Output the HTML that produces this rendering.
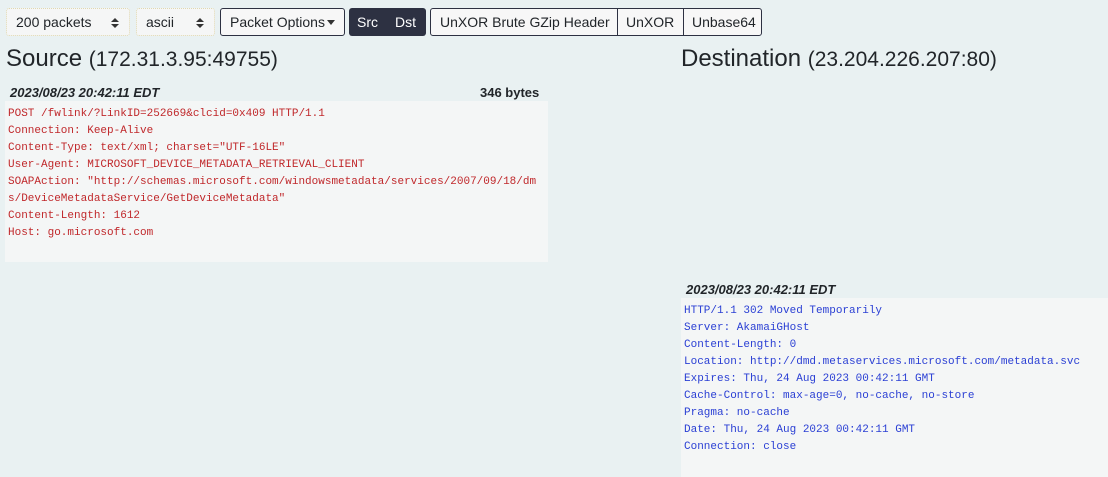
<!DOCTYPE html>
<html><head><style>
body{margin:0;width:1108px;height:477px;background:#e9f1f2;font-family:"Liberation Sans",sans-serif;color:#212529;position:relative;overflow:hidden}
.b{position:absolute;top:8px;height:28px;box-sizing:border-box;font-size:14px;line-height:26px;padding:0 9px;color:#212529;white-space:nowrap}
.sel{border:1px dotted #e0d8b0;background:#f5f6f6;border-radius:3px}
.btn{border:1px solid #2d3142;background:#f7f7f7}
.h{position:absolute;top:45px;font-size:24px;color:#212529;white-space:nowrap}
.h span{font-size:21px}
.ts{position:absolute;font-size:13px;font-weight:bold;font-style:italic;color:#212529}
pre{position:absolute;margin:0;background:#f4f6f6;font-family:"Liberation Mono",monospace;font-size:11px;line-height:17px;padding:5px 3px;box-sizing:border-box}
.ar{position:absolute;right:10px;top:9px;width:8px;height:10px}
</style></head><body>
<div class="b sel" style="left:6px;width:124px">200 packets<svg class="ar" viewBox="0 0 8 10"><path d="M0 4L4 0L8 4ZM0 6L4 10L8 6Z" fill="#333"/></svg></div>
<div class="b sel" style="left:136px;width:79px">ascii<svg class="ar" viewBox="0 0 8 10"><path d="M0 4L4 0L8 4ZM0 6L4 10L8 6Z" fill="#333"/></svg></div>
<div class="b btn" style="left:220px;width:125px;border-radius:3px">Packet Options<svg style="position:absolute;right:9px;top:11px" width="8" height="5" viewBox="0 0 8 5"><path d="M0 0H8L4 5Z" fill="#333"/></svg></div>
<div class="b" style="left:349px;width:77px;background:#2d3142;color:#fff;border-radius:3px;padding:0"><span style="position:absolute;left:8px;top:0;line-height:28px">Src</span><span style="position:absolute;left:46px;top:0;line-height:28px">Dst</span></div>
<div class="b btn" style="left:430px;width:188px;border-radius:3px 0 0 3px;padding:0 9px">UnXOR Brute GZip Header</div>
<div class="b btn" style="left:617px;width:67px;padding:0 8px">UnXOR</div>
<div class="b btn" style="left:683px;width:79px;border-radius:0 3px 3px 0;padding:0 8px">Unbase64</div>
<div class="h" style="left:6px">Source <span>(172.31.3.95:49755)</span></div>
<div class="h" style="left:681px">Destination <span>(23.204.226.207:80)</span></div>
<div class="ts" style="left:10px;top:85px">2023/08/23 20:42:11 EDT</div>
<div class="ts" style="left:480px;top:85px;font-style:normal">346 bytes</div>
<pre style="left:5px;top:101px;width:543px;height:161px;color:#c0282b">POST /fwlink/?LinkID=252669&amp;clcid=0x409 HTTP/1.1
Connection: Keep-Alive
Content-Type: text/xml; charset="UTF-16LE"
User-Agent: MICROSOFT_DEVICE_METADATA_RETRIEVAL_CLIENT
SOAPAction: "http://schemas.microsoft.com/windowsmetadata/services/2007/09/18/dm
s/DeviceMetadataService/GetDeviceMetadata"
Content-Length: 1612
Host: go.microsoft.com</pre>
<div class="ts" style="left:686px;top:282px">2023/08/23 20:42:11 EDT</div>
<pre style="left:681px;top:298px;width:427px;height:179px;color:#2a3fd4">HTTP/1.1 302 Moved Temporarily
Server: AkamaiGHost
Content-Length: 0
Location: http://dmd.metaservices.microsoft.com/metadata.svc
Expires: Thu, 24 Aug 2023 00:42:11 GMT
Cache-Control: max-age=0, no-cache, no-store
Pragma: no-cache
Date: Thu, 24 Aug 2023 00:42:11 GMT
Connection: close</pre>
</body></html>
